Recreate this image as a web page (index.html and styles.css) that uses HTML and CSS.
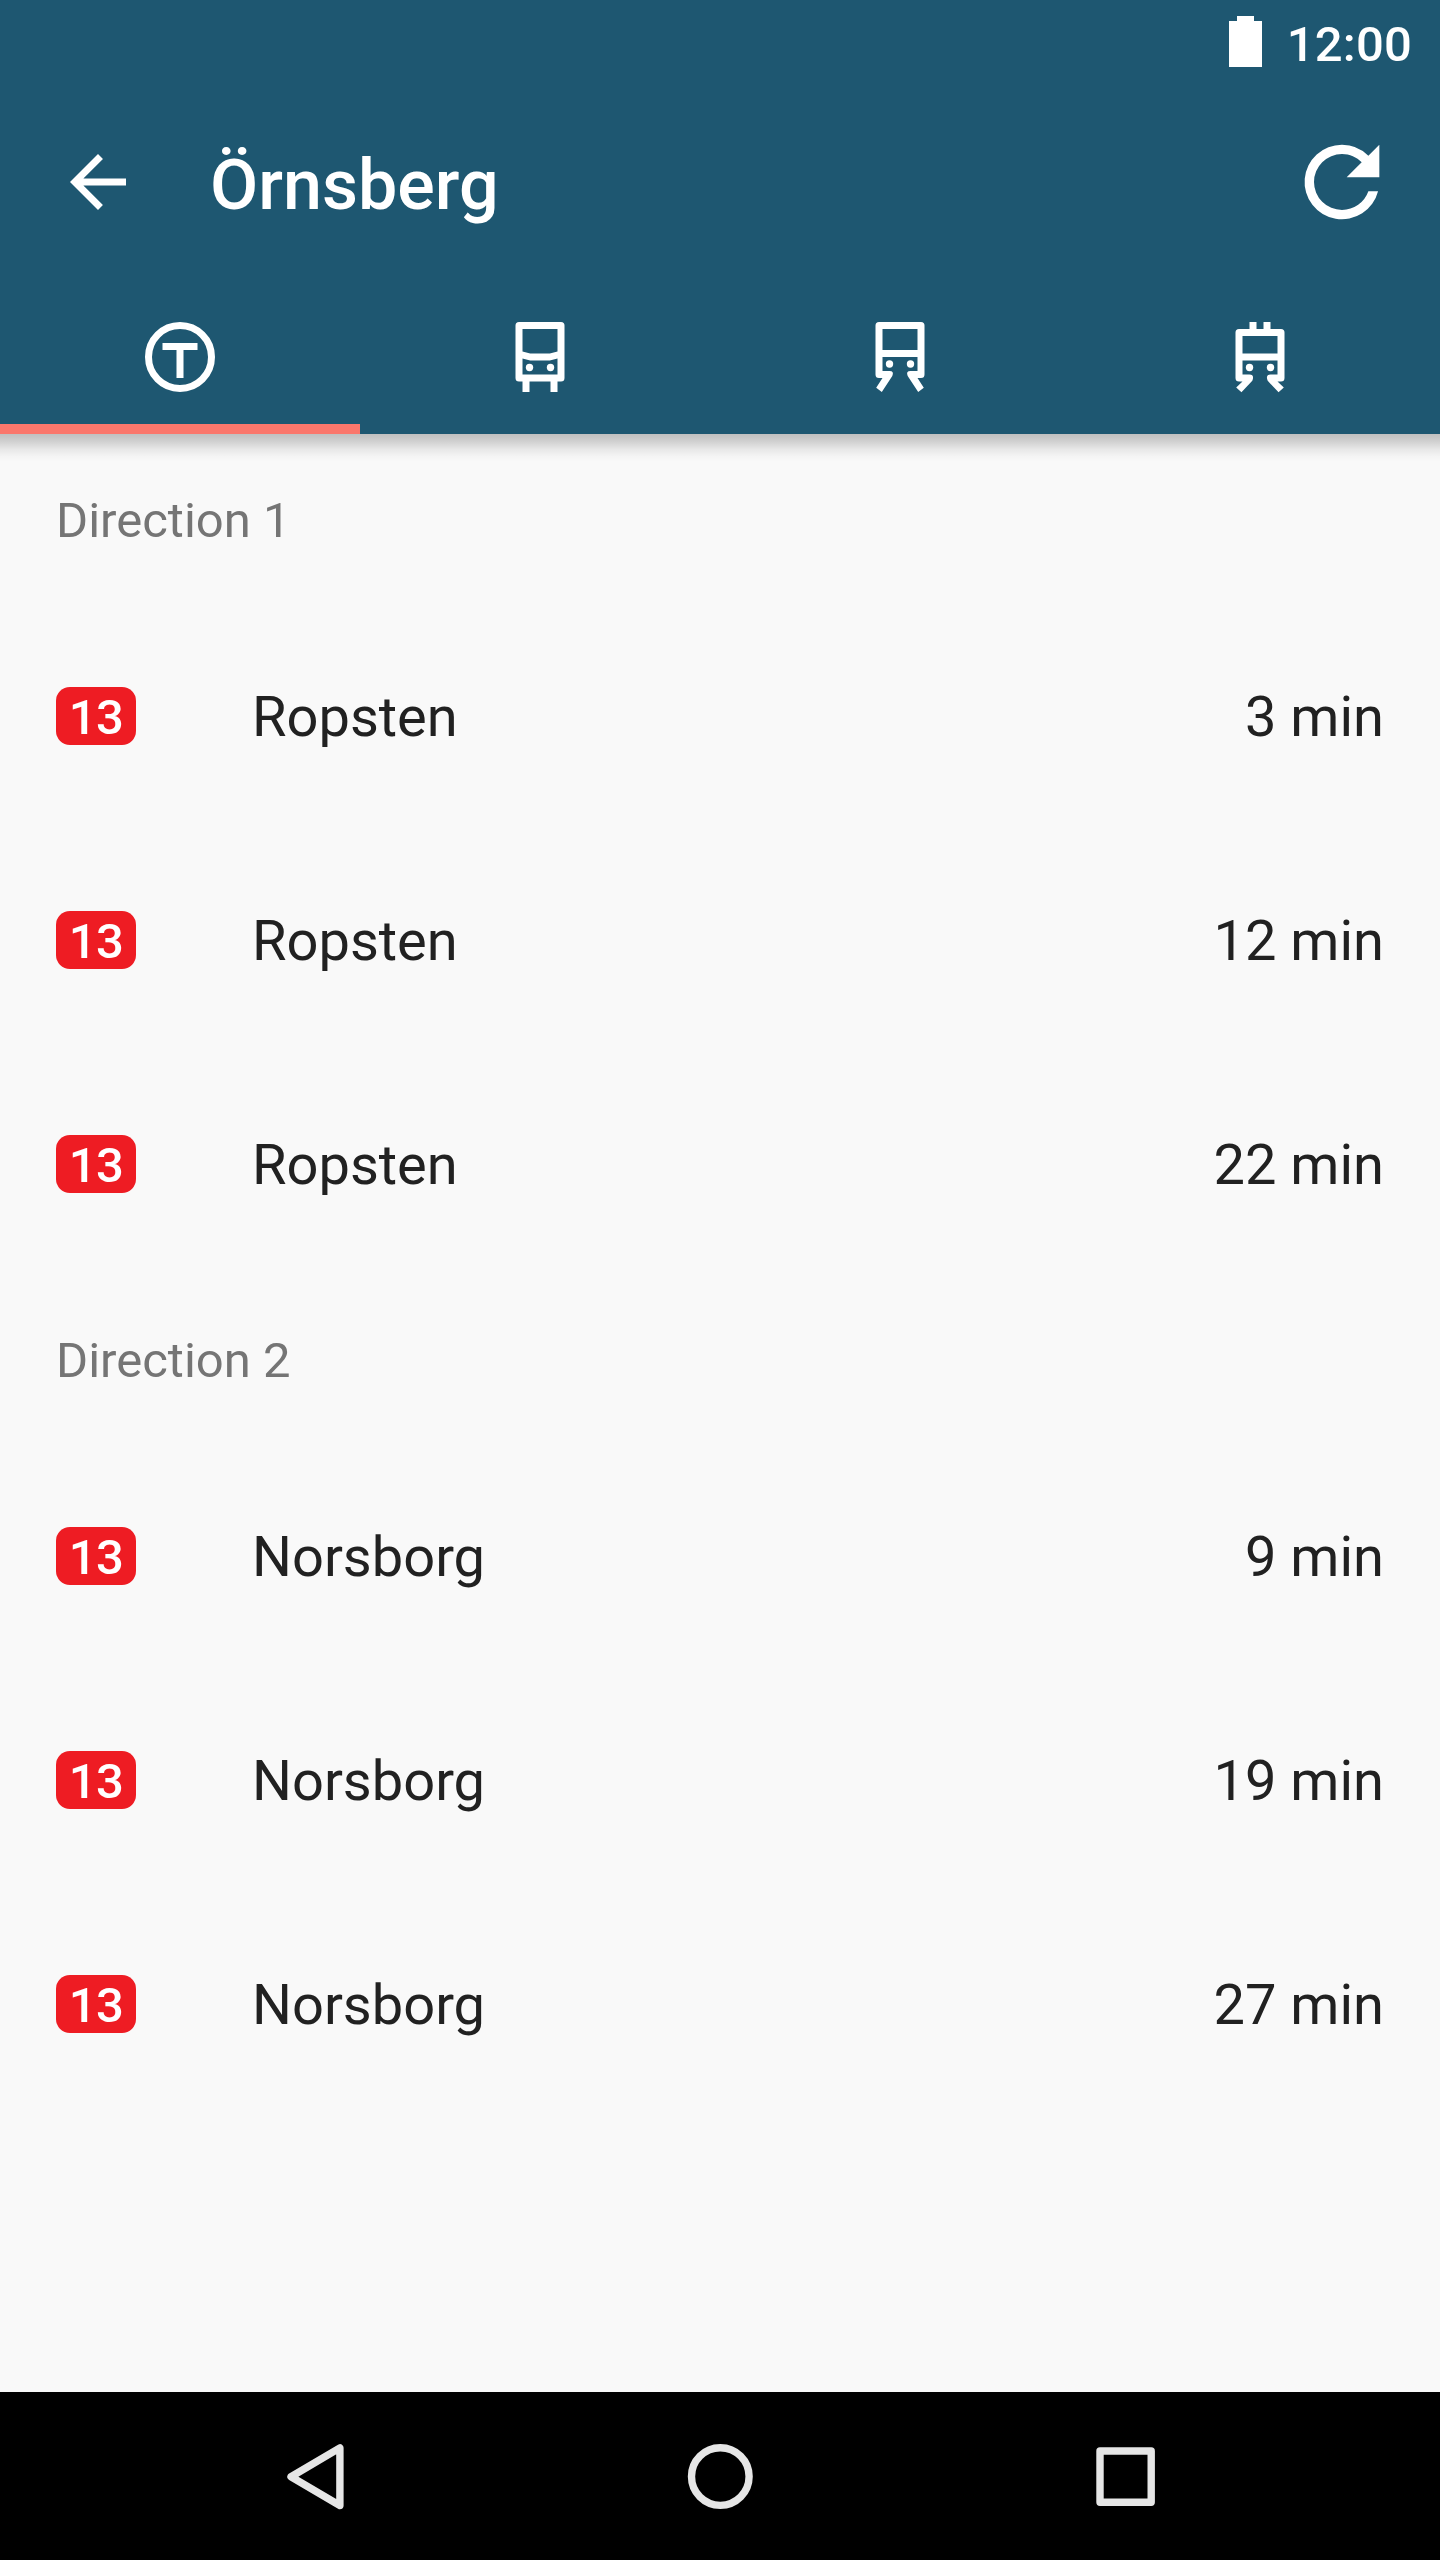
FILE: index.html
```html
<!DOCTYPE html>
<html lang="en">
<head>
    <meta charset="UTF-8">
    <title>Örnsberg</title>
    <link rel="stylesheet" href="styles.css">
</head>
<body>
    <header>
        <div class="status-bar">
            <svg class="battery" viewBox="0 0 33 51"><path d="M8 0h17v5h8v46H0V5h8z"/></svg>
            <span>12:00</span>
        </div>
        <div class="toolbar">
            <svg class="icon" viewBox="0 0 24 24"><path d="M20 11H7.83l5.59-5.59L12 4l-8 8 8 8 1.41-1.41L7.83 13H20v-2z"/></svg>
            <h1>Örnsberg</h1>
            <svg class="icon refresh" viewBox="0 0 24 24"><path d="M17.65 6.35A7.958 7.958 0 0 0 12 4a8 8 0 1 0 7.73 10h-2.08A5.99 5.99 0 0 1 12 18a6 6 0 1 1 0-12c1.66 0 3.14.69 4.22 1.78L13 11h7V4l-2.35 2.35z"/></svg>
        </div>
        <nav class="tabs">
            <!-- metro -->
            <div class="tab active">
                <svg class="icon" viewBox="0 0 24 24">
                    <circle cx="12" cy="12" r="9" fill="none" stroke="#fff" stroke-width="2"/>
                    <path d="M7 8h10v2h-4v8h-2v-8H7z"/>
                </svg>
            </div>
            <!-- bus -->
            <div class="tab">
                <svg class="icon" viewBox="0 0 24 24">
                    <path fill-rule="evenodd" d="M6 2h12q1 0 1 1v15q0 1-1 1h-1v3h-2v-3H9v3H7v-3H6q-1 0-1-1V3q0-1 1-1zM7 4v6.4L9.2 11h5.6l2.2-.6V4zM7 12.4V17h10v-4.6l-2.2.6H9.2z"/>
                    <circle cx="9" cy="15" r="1.05"/>
                    <circle cx="15" cy="15" r="1.05"/>
                </svg>
            </div>
            <!-- train -->
            <div class="tab">
                <svg class="icon" viewBox="0 0 24 24">
                    <path d="M6 2h12q1 0 1 1v14q0 1-1 1h-1l1.8 2.8-1.6 1.2-3-4.6q-.6-1.4.8-1.4h2v-4H7v4h2q1.4 0 .8 1.4l-3 4.6-1.6-1.2L7 18H6q-1 0-1-1V3q0-1 1-1zM7 4v6h10V4z" fill-rule="evenodd"/>
                    <circle cx="9" cy="14" r="1.05"/>
                    <circle cx="15" cy="14" r="1.05"/>
                </svg>
            </div>
            <!-- tram -->
            <div class="tab">
                <svg class="icon" viewBox="0 0 24 24">
                    <path d="M6 4h3V2h2v2h2V2h2v2h3q1 0 1 1v13q0 1-1 1h-1l1.8 1.7-1.5 1.4-3.1-3.3q-.7-1.8.8-1.8h2v-4H7v4h2q1.5 0 .8 1.8l-3.1 3.3-1.5-1.4L7 19H6q-1 0-1-1V5q0-1 1-1zM7 6v5h10V6z" fill-rule="evenodd"/>
                    <circle cx="9" cy="15" r="1.05"/>
                    <circle cx="15" cy="15" r="1.05"/>
                </svg>
            </div>
        </nav>
    </header>

    <main>
        <h2>Direction 1</h2>
        <div class="row"><span class="line">13</span><span class="name">Ropsten</span><span class="time">3 min</span></div>
        <div class="row"><span class="line">13</span><span class="name">Ropsten</span><span class="time">12 min</span></div>
        <div class="row"><span class="line">13</span><span class="name">Ropsten</span><span class="time">22 min</span></div>
        <h2>Direction 2</h2>
        <div class="row"><span class="line">13</span><span class="name">Norsborg</span><span class="time">9 min</span></div>
        <div class="row"><span class="line">13</span><span class="name">Norsborg</span><span class="time">19 min</span></div>
        <div class="row"><span class="line">13</span><span class="name">Norsborg</span><span class="time">27 min</span></div>
    </main>

    <footer class="nav-bar">
        <svg viewBox="0 0 84 84"><path d="M18 42.7L66.9 13.9v57.6z"/></svg>
        <svg viewBox="0 0 84 84"><circle cx="42.3" cy="42.6" r="28.8"/></svg>
        <svg viewBox="0 0 84 84"><path d="M17 17h51.2v51.2H17z"/></svg>
    </footer>
</body>
</html>
```
FILE: styles.css
```css
body {
    margin: 0;
    height: 2560px;
    display: flex;
    flex-direction: column;
    font-family: Roboto, sans-serif;
    background: #f9f9f9;
    color: #212121;
}
header {
    position: relative;
    background: #1e5771;
    color: #fff;
}
/* shadow under the app bar */
header::after {
    content: "";
    position: absolute;
    top: 100%;
    left: 0;
    right: 0;
    height: 28px;
    background: linear-gradient(rgba(0,0,0,0.23), rgba(0,0,0,0.17) 25%, rgba(0,0,0,0.07) 55%, rgba(0,0,0,0.02) 80%, rgba(0,0,0,0));
}
.status-bar {
    height: 84px;
    padding-right: 28px;
    display: flex;
    justify-content: flex-end;
    font-size: 49px;
    font-weight: 500;
    line-height: 90px;
    letter-spacing: 0.2px;
}
.battery {
    width: 33px;
    height: 51px;
    margin: 16px 25px 0 0;
    fill: #fff;
}
.toolbar {
    height: 196px;
    padding: 0 42px 0 56px;
    display: flex;
    align-items: center;
}
.icon {
    display: block;
    width: 84px;
    height: 84px;
    fill: #fff;
}
.refresh {
    width: 112px;
    height: 112px;
}
h1 {
    flex: 1;
    margin: 0;
    padding: 6px 0 0 70px;
    font-size: 70px;
    font-weight: 500;
}
.tabs {
    display: flex;
    height: 154px;
}
.tab {
    flex: 1;
    display: flex;
    align-items: center;
    justify-content: center;
}
.active {
    box-shadow: inset 0 -10px #fa776c;
}
main {
    flex: 1;
    padding: 2px 56px 0;
}
h2 {
    height: 168px;
    margin: 0;
    font-size: 49px;
    font-weight: 400;
    line-height: 170px;
    color: #757575;
}
.row {
    height: 224px;
    display: flex;
    align-items: center;
    font-size: 56px;
}
.line {
    width: 80px;
    height: 58px;
    border-radius: 14px;
    background: #ee1c23;
    color: #fff;
    font-size: 49px;
    font-weight: 500;
    line-height: 61px;
    letter-spacing: -0.6px;
    text-align: center;
}
.name {
    flex: 1;
    padding: 2px 0 0 116px;
}
.time {
    padding-top: 2px;
}
.nav-bar {
    height: 168px;
    display: flex;
    align-items: center;
    justify-content: center;
    gap: 321px;
    background: #000;
}
.nav-bar svg {
    width: 84px;
    height: 84px;
    fill: none;
    stroke: #e6e6e6;
    stroke-width: 7.4;
    stroke-linejoin: round;
}
```
